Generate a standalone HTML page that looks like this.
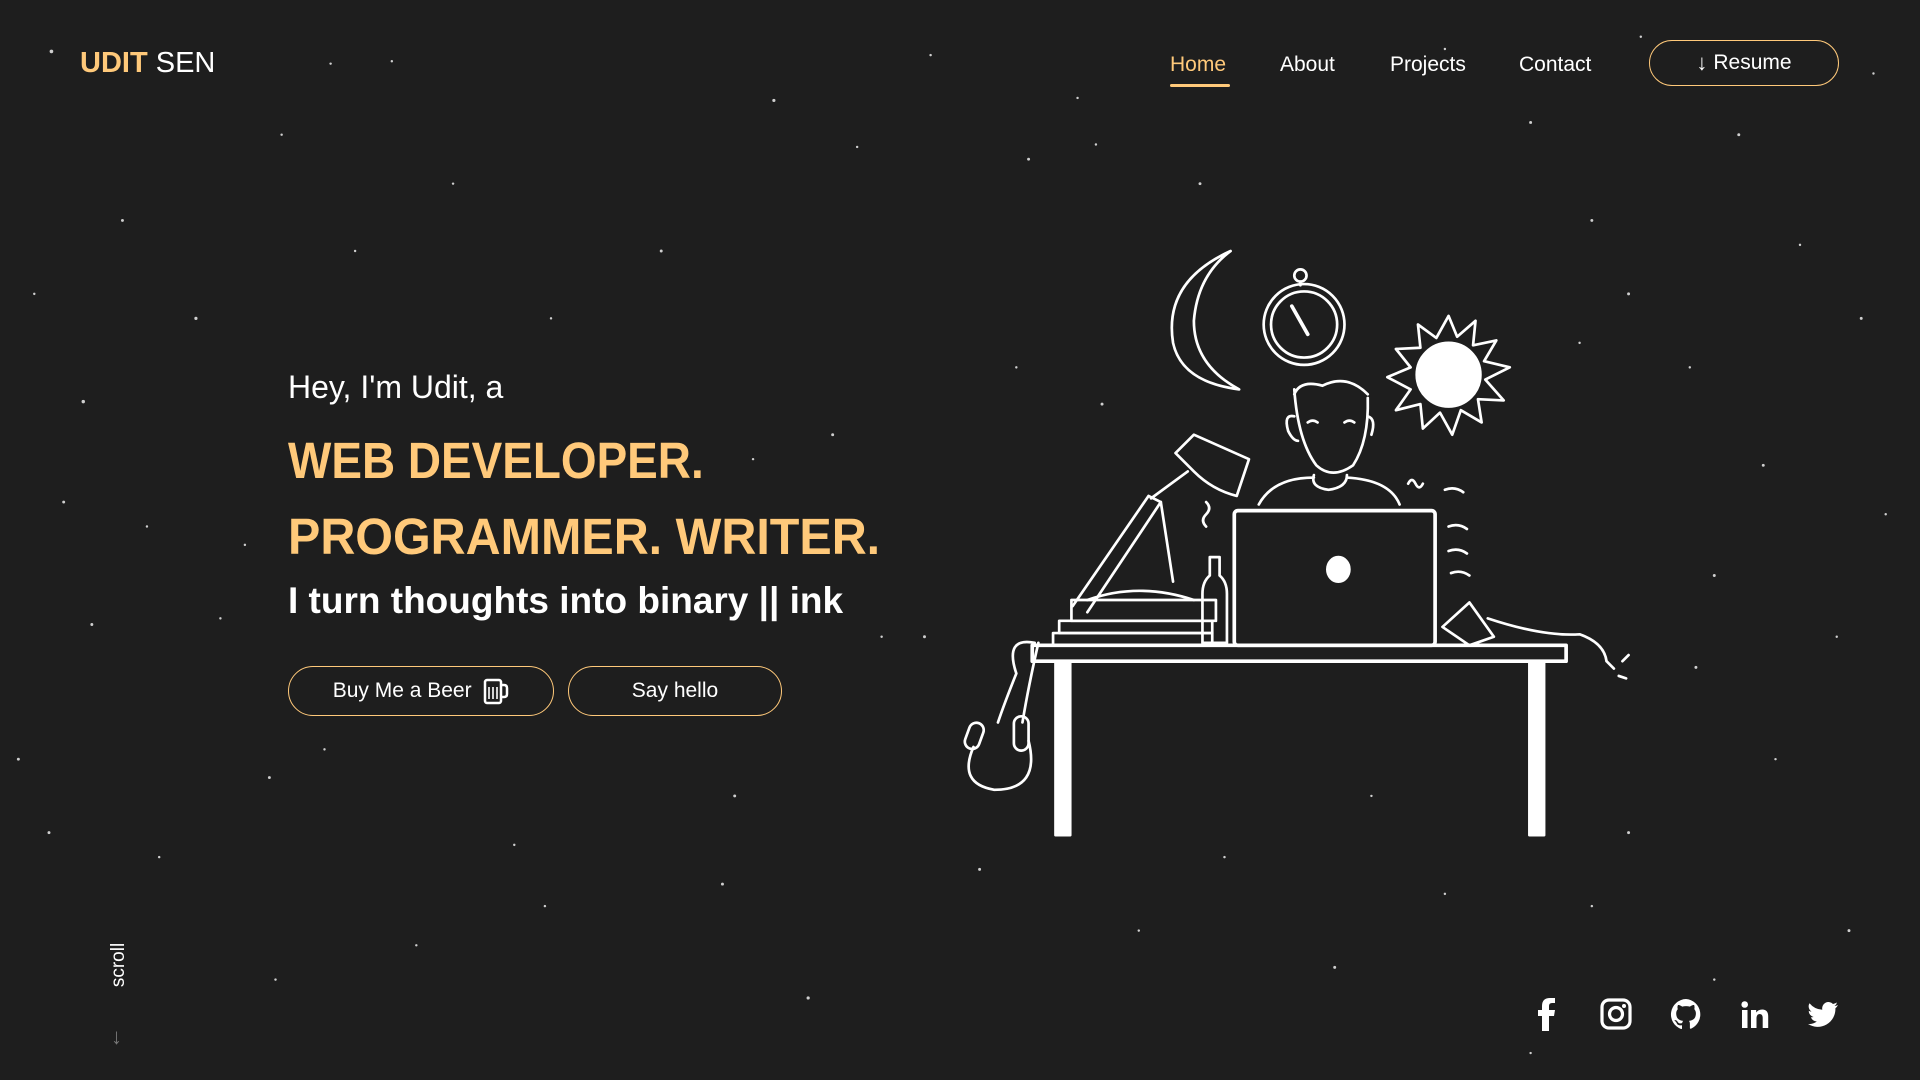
<!DOCTYPE html>
<html><head><meta charset="utf-8"><style>
*{margin:0;padding:0;box-sizing:border-box}
body{width:1920px;height:1080px;background:#1e1e1e;overflow:hidden;position:relative;font-family:"Liberation Sans",sans-serif;color:#fff}
.abs{position:absolute}
.logo{left:80px;top:47px;font-size:29px;letter-spacing:0px}
.logo b{color:#ffc97a;font-weight:700}
.nav a{position:absolute;top:53px;font-size:21px;color:#fff;text-decoration:none}
.btn{position:absolute;border:1.5px solid #ffc97a;border-radius:30px;color:#fff;font-size:21px;display:flex;align-items:center;justify-content:center}
h1{position:absolute;left:288px;font-size:51px;font-weight:700;color:#ffc97a;white-space:nowrap;transform-origin:left center}
</style></head><body>
<svg class="abs" style="left:0;top:0" width="1920" height="1080" viewBox="0 0 1568 882">
<g fill="#cfcfcf">
<circle cx="42" cy="42" r="1.5"/><circle cx="270" cy="52" r="1"/><circle cx="320" cy="50" r="1"/><circle cx="632" cy="82" r="1.3"/><circle cx="700" cy="120" r="1"/><circle cx="760" cy="45" r="1"/><circle cx="840" cy="130" r="1.2"/><circle cx="895" cy="118" r="1"/><circle cx="230" cy="110" r="1"/><circle cx="100" cy="180" r="1.2"/><circle cx="370" cy="150" r="1"/><circle cx="540" cy="205" r="1.2"/><circle cx="28" cy="240" r="1"/><circle cx="160" cy="260" r="1.3"/><circle cx="290" cy="205" r="1"/><circle cx="450" cy="260" r="1"/><circle cx="680" cy="355" r="1.2"/><circle cx="615" cy="375" r="1"/><circle cx="68" cy="328" r="1.4"/><circle cx="52" cy="410" r="1.2"/><circle cx="200" cy="445" r="1"/><circle cx="120" cy="430" r="1"/><circle cx="75" cy="510" r="1.2"/><circle cx="180" cy="505" r="1"/><circle cx="720" cy="520" r="1"/><circle cx="755" cy="520" r="1.2"/><circle cx="15" cy="620" r="1.2"/><circle cx="220" cy="635" r="1.2"/><circle cx="265" cy="612" r="1"/><circle cx="600" cy="650" r="1.2"/><circle cx="420" cy="690" r="1"/><circle cx="590" cy="722" r="1.2"/><circle cx="445" cy="740" r="1"/><circle cx="225" cy="800" r="1"/><circle cx="660" cy="815" r="1.3"/><circle cx="340" cy="772" r="1"/><circle cx="130" cy="700" r="1"/><circle cx="40" cy="680" r="1.2"/><circle cx="880" cy="80" r="1"/><circle cx="980" cy="150" r="1.2"/><circle cx="1180" cy="40" r="1"/><circle cx="1250" cy="100" r="1.2"/><circle cx="1340" cy="30" r="1"/><circle cx="1420" cy="110" r="1.2"/><circle cx="1530" cy="60" r="1"/><circle cx="1300" cy="180" r="1.2"/><circle cx="1470" cy="200" r="1"/><circle cx="1520" cy="260" r="1.2"/><circle cx="1380" cy="300" r="1"/><circle cx="1440" cy="380" r="1.2"/><circle cx="1540" cy="420" r="1"/><circle cx="1400" cy="470" r="1.2"/><circle cx="1500" cy="520" r="1"/><circle cx="1385" cy="545" r="1.2"/><circle cx="1450" cy="620" r="1"/><circle cx="1330" cy="680" r="1.2"/><circle cx="1510" cy="760" r="1.2"/><circle cx="1180" cy="730" r="1"/><circle cx="1090" cy="790" r="1.2"/><circle cx="1400" cy="800" r="1"/><circle cx="1250" cy="860" r="1"/><circle cx="930" cy="760" r="1"/><circle cx="800" cy="710" r="1.2"/><circle cx="1000" cy="700" r="1"/><circle cx="1300" cy="740" r="1"/><circle cx="1120" cy="650" r="1"/><circle cx="830" cy="300" r="1"/><circle cx="900" cy="330" r="1.2"/><circle cx="1290" cy="280" r="1"/><circle cx="1330" cy="240" r="1.2"/>
</g>
<g fill="none" stroke="#fff" stroke-width="2.2" stroke-linecap="round" stroke-linejoin="round">
<path d="M1005 205 Q950 230 958 280 Q965 312 1012 318 Q975 298 975 262 Q978 225 1005 205Z"/>
<circle cx="1065" cy="265" r="33"/><circle cx="1065" cy="265" r="27"/>
<circle cx="1062" cy="225" r="5"/><path d="M1062 230V233"/>
<path d="M1055 250L1068 273" stroke-width="3"/>
<path d="M1183 258L1190 275L1205 262L1203 282L1222 278L1212 295L1233 300L1213 310L1228 327L1207 326L1210 345L1193 335L1186 355L1176 337L1162 350L1160 330L1140 335L1152 318L1133 308L1152 300L1140 285L1160 284L1158 265L1173 276Z"/>
<circle cx="1183" cy="306" r="26" fill="#fff"/>
<path d="M1057 318Q1060 360 1075 380Q1088 392 1105 380Q1118 360 1117 325"/>
<path d="M1057 322Q1062 310 1080 315Q1100 305 1117 322"/>
<path d="M1057 340Q1048 338 1052 352Q1056 360 1060 360M1117 340Q1124 342 1120 355"/>
<path d="M1068 345q4-3 8 0M1098 345q4-3 8 0"/>
<path d="M1073 388Q1070 398 1085 400Q1100 398 1100 388M1028 412Q1040 390 1073 390M1100 390Q1135 392 1143 412"/>
<rect x="1008" y="417" width="164" height="110" rx="3" stroke-width="3"/>
<path d="M1093 455a9 10 0 1 0 0 20 M1093 455a9 10 0 0 1 0 20" fill="#fff"/>
<rect x="843" y="527" width="436" height="13" stroke-width="3"/>
<rect x="862" y="540" width="12" height="142" fill="#fff"/>
<rect x="1249" y="540" width="12" height="142" fill="#fff"/>
<path d="M876 495L938 405L948 410L888 500"/>
<path d="M940 407L970 385M948 410L958 475"/>
<path d="M960 370L975 355L1020 375L1010 405Q990 400 975 385Z"/>
<rect x="875" y="490" width="118" height="17"/>
<path d="M888 490Q930 475 975 490"/>
<rect x="865" y="507" width="125" height="10"/><rect x="860" y="517" width="130" height="10"/>
<path d="M988 455h8v15q6 5 6 15v40h-20v-40q0-10 6-15z"/>
<path d="M1178 512L1200 492L1220 520L1200 527ZM1215 505Q1260 520 1290 518Q1310 525 1312 540M1312 540l6 6"/>
<path d="M845 525Q820 520 830 550Q820 575 815 590M848 525Q840 560 835 590"/>
<path d="M795 610Q782 640 812 645Q850 645 840 605"/>
<rect x="790" y="590" width="12" height="22" rx="6" transform="rotate(20 796 600)"/>
<rect x="828" y="585" width="12" height="28" rx="6"/>
<path d="M985 410q5 5 0 10q-5 5 0 10M1180 400q8-3 15 2M1183 430q8-3 15 2M1183 450q8-3 15 2M1185 468q8-3 15 2M1150 395q3-6 6 0q3 6 6 0M1325 540l5-5M1322 552l6 2"/>
</g>
</svg>
<div class="abs logo"><b>UDIT</b> SEN</div>
<div class="nav">
<a style="left:1170px;color:#ffc97a">Home</a><div class="abs" style="left:1170px;top:84px;width:60px;height:3px;background:#ffc97a;border-radius:2px"></div>
<a style="left:1280px">About</a><a style="left:1390px">Projects</a><a style="left:1519px">Contact</a>
</div>
<div class="btn" style="left:1649px;top:40px;width:190px;height:46px"><span style="font-size:22px;margin-right:6px">&#8595;</span>Resume</div>
<div class="abs" style="left:288px;top:369px;font-size:32px">Hey, I'm Udit, a</div>
<h1 style="top:431px;transform:scaleX(0.9)">WEB DEVELOPER.</h1>
<h1 style="top:507px;transform:scaleX(0.95)">PROGRAMMER. WRITER.</h1>
<div class="abs" style="left:288px;top:580px;font-size:37px;font-weight:700">I turn thoughts into binary || ink</div>
<div class="btn" style="left:288px;top:666px;width:266px;height:50px">Buy Me a Beer&nbsp;&nbsp;<svg width="26" height="28" viewBox="0 0 26 28"><rect x="2" y="3" width="16" height="23" rx="2" fill="none" stroke="#fff" stroke-width="2.5"/><path d="M18 8h3q3 0 3 3v6q0 3-3 3h-3" fill="none" stroke="#fff" stroke-width="2.5"/><path d="M6 10v12M10 10v12M14 10v12" stroke="#fff" stroke-width="1.6"/></svg></div>
<div class="btn" style="left:568px;top:666px;width:214px;height:50px">Say hello</div>
<div class="abs" style="left:90px;top:953px;transform:rotate(-90deg);font-size:19px;width:60px;height:24px;text-align:center">scroll</div>
<div class="abs" style="left:111px;top:1024px;color:#777;font-size:22px">&#8595;</div>
<svg class="abs" style="left:1530px;top:996px" width="310" height="36" viewBox="0 0 310 36" fill="#fff">
<path d="M19 35V20h5l1-6h-6v-4q0-3 3-3h3V2h-5q-8 0-8 8v4h-4v6h4v15z"/>
<g transform="translate(70,2)"><rect x="2" y="2" width="28" height="28" rx="7" fill="none" stroke="#fff" stroke-width="3.2"/><circle cx="16" cy="16" r="6.5" fill="none" stroke="#fff" stroke-width="3.2"/><circle cx="24" cy="8" r="2"/></g>
<g transform="translate(140,2)"><path d="M16 1a15.5 15.5 0 0 0-5 30c.8.1 1-.3 1-.8v-3c-4.3.9-5.2-1.8-5.2-1.8-.7-1.8-1.7-2.300-1.7-2.3-1.400-1 .1-1 .1-1 1.6.1 2.400 1.600 2.400 1.600 1.400 2.400 3.700 1.700 4.600 1.300.1-1 .6-1.700 1-2.100-3.400-.4-7-1.700-7-7.600 0-1.700.6-3.100 1.600-4.200-.2-.4-.7-2 .2-4.100 0 0 1.300-.4 4.200 1.600a14.500 14.500 0 0 1 7.700 0c2.900-2 4.200-1.600 4.200-1.600.8 2.100.3 3.700.2 4.100 1 1.100 1.600 2.500 1.600 4.200 0 5.900-3.600 7.200-7 7.600.6.5 1 1.400 1 2.800v4.200c0 .5.3.9 1 .8A15.500 15.500 0 0 0 16 1z"/></g>
<g transform="translate(210,4)"><rect x="2" y="10" width="5.500" height="18"/><circle cx="4.700" cy="4.500" r="3.300"/><path d="M11 10h5.200v2.500q2-3 6-3 6 0 6 7V28h-5.500V18q0-4-3-4t-3.200 4v10H11z"/></g>
<g transform="translate(278,4)"><path d="M30 5q-2 1-3.500 1 2-1.500 2.500-3.500-2 1-4 1.500a6.300 6.300 0 0 0-10.700 5.700A17.800 17.800 0 0 1 1.500 3.200a6.300 6.300 0 0 0 2 8.400q-1.500 0-2.800-.8a6.300 6.300 0 0 0 5 6.200q-1.400.4-2.800.1a6.300 6.300 0 0 0 5.900 4.400A12.600 12.600 0 0 1 0 24a17.800 17.800 0 0 0 27.400-15.800Q29 7 30 5z"/></g>
</svg>
</body></html>
